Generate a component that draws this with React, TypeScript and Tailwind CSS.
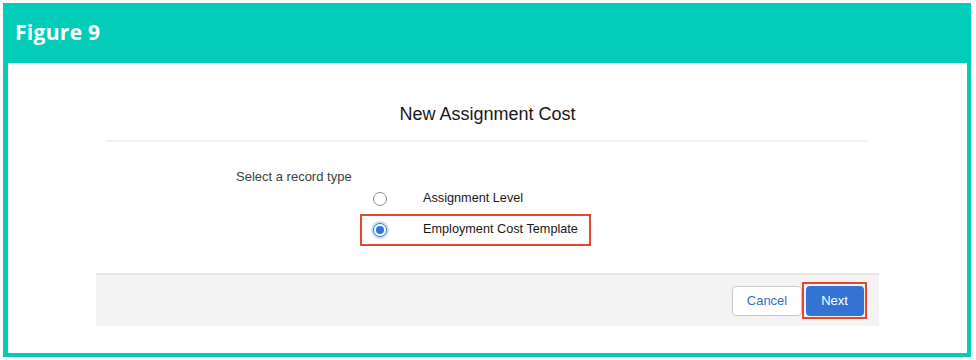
export default function App() {
  const ui = { fontFamily: '"Liberation Sans", Arial, sans-serif' };

  return (
    <div className="w-[976px] h-[360px] bg-white p-[3px]">
      <div className="flex flex-col w-[968px] h-[354px] bg-[#03cdb9]">
        {/* figure header */}
        <div className="h-[60px] flex items-center pl-[12px]">
          <span
            className="text-white text-[21px] font-bold tracking-[0.3px]"
            style={{ fontFamily: '"Open Sans", sans-serif' }}
          >
            Figure 9
          </span>
        </div>

        {/* screenshot body */}
        <div className="flex-1 bg-white ml-[5px] mr-[4px] mb-[4px] px-[88px]" style={ui}>
          <div className="flex flex-col">
            <h2 className="pt-[39px] mb-[14px] text-center text-[18px] leading-[24px] text-[#181818]">
              New Assignment Cost
            </h2>
            <div className="mx-[10px] mr-[11px] h-[2px] bg-[#f2f2f2]" />

            <p className="pt-[26px] pl-[140px] text-[13px] leading-[18px] text-[#3e3e3c]">
              Select a record type
            </p>

            <div className="-mt-[3px] ml-[264px] flex flex-col">
              <label className="h-[31px] flex items-center pl-[13px]">
                <span className="w-[14px] h-[14px] rounded-full border border-[#8c8c8c] bg-white" />
                <span className="ml-[36px] text-[12.7px] text-[#181818]">Assignment Level</span>
              </label>
              <label className="w-[231px] h-[32px] flex items-center pl-[11px] border-2 border-[#e9442f]">
                <span className="w-[14px] h-[14px] rounded-full border border-[#2f74d6] bg-white flex items-center justify-center shadow-[0_0_0_2px_rgba(47,116,214,0.25)]">
                  <span className="w-[8px] h-[8px] rounded-full bg-[#2f74d6]" />
                </span>
                <span className="ml-[36px] text-[12.7px] text-[#181818]">Employment Cost Template</span>
              </label>
            </div>

            <div className="mt-[27px] h-[53px] bg-[#f3f3f3] border-t-2 border-[#e6e6e6] flex items-center justify-end pr-[12px]">
              <button className="w-[70px] h-[30px] rounded-[4px] border border-[#c9c9c9] bg-white text-[13px] text-[#2f6fd0]">
                Cancel
              </button>
              <div className="w-[65px] h-[37px] border-2 border-[#e9442f] flex items-center justify-center">
                <button className="w-[58px] h-[30px] rounded-[4px] bg-[#3273d3] text-[13px] text-white">
                  Next
                </button>
              </div>
            </div>
          </div>
        </div>
      </div>
    </div>
  );
}
